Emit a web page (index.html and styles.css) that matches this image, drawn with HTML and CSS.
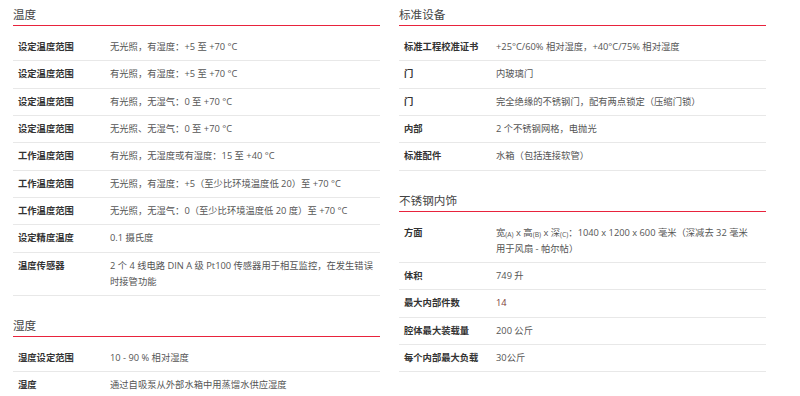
FILE: index.html
```html
<!DOCTYPE html>
<html lang="zh">
<head>
<meta charset="utf-8">
<link rel="stylesheet" href="styles.css">
</head>
<body>
<div class="page">
  <div class="col">
    <section class="sec">
      <h2 class="title">温度</h2>
      <div class="rows">
        <div class="row"><div class="k">设定温度范围</div><div class="v">无光照，有湿度：+5 至 +70 °C</div></div>
        <div class="row"><div class="k">设定温度范围</div><div class="v">有光照，有湿度：+5 至 +70 °C</div></div>
        <div class="row"><div class="k">设定温度范围</div><div class="v">有光照，无湿气：0 至 +70 °C</div></div>
        <div class="row"><div class="k">设定温度范围</div><div class="v">无光照、无湿气：0 至 +70 °C</div></div>
        <div class="row"><div class="k">工作温度范围</div><div class="v">有光照，无湿度或有湿度：15 至 +40 °C</div></div>
        <div class="row"><div class="k">工作温度范围</div><div class="v">无光照，有湿度：+5（至少比环境温度低 20）至 +70 °C</div></div>
        <div class="row"><div class="k">工作温度范围</div><div class="v">无光照，无湿气：0（至少比环境温度低 20 度）至 +70 °C</div></div>
        <div class="row"><div class="k">设定精度温度</div><div class="v">0.1 摄氏度</div></div>
        <div class="row"><div class="k">温度传感器</div><div class="v">2 个 4 线电路 DIN A 级 Pt100 传感器用于相互监控，在发生错误时接管功能</div></div>
      </div>
    </section>
    <section class="sec">
      <h2 class="title">湿度</h2>
      <div class="rows">
        <div class="row"><div class="k">湿度设定范围</div><div class="v">10 - 90 % 相对湿度</div></div>
        <div class="row"><div class="k">湿度</div><div class="v">通过自吸泵从外部水箱中用蒸馏水供应湿度</div></div>
      </div>
    </section>
  </div>
  <div class="col">
    <section class="sec">
      <h2 class="title">标准设备</h2>
      <div class="rows">
        <div class="row"><div class="k">标准工程校准证书</div><div class="v">+25°C/60% 相对湿度，+40°C/75% 相对湿度</div></div>
        <div class="row"><div class="k">门</div><div class="v">内玻璃门</div></div>
        <div class="row"><div class="k">门</div><div class="v">完全绝缘的不锈钢门，配有两点锁定（压缩门锁）</div></div>
        <div class="row"><div class="k">内部</div><div class="v">2 个不锈钢网格，电抛光</div></div>
        <div class="row"><div class="k">标准配件</div><div class="v">水箱（包括连接软管）</div></div>
      </div>
    </section>
    <section class="sec">
      <h2 class="title">不锈钢内饰</h2>
      <div class="rows">
        <div class="row"><div class="k">方面</div><div class="v">宽<sub>(A)</sub> x 高<sub>(B)</sub> x 深<sub>(C)</sub>：1040 x 1200 x 600 毫米（深减去 32 毫米用于风扇 - 帕尔帖）</div></div>
        <div class="row"><div class="k">体积</div><div class="v">749 升</div></div>
        <div class="row"><div class="k">最大内部件数</div><div class="v accent">14</div></div>
        <div class="row"><div class="k">腔体最大装载量</div><div class="v">200 公斤</div></div>
        <div class="row"><div class="k">每个内部最大负载</div><div class="v">30公斤</div></div>
      </div>
    </section>
    <section class="sec">
      <h2 class="title">体积与重量</h2>
    </section>
  </div>
</div>
</body>
</html>
```

FILE: styles.css
```css
html, body {
  margin: 0;
  padding: 0;
  background: #ffffff;
}
body {
  font-family: "Open Sans", "Noto Sans CJK SC", sans-serif;
  font-size: 9.3px;
  color: #555555;
  overflow: hidden;
  height: 396px;
}
.page {
  display: grid;
  grid-template-columns: 367px 367px;
  column-gap: 19px;
  padding-left: 13px;
}
.sec {
  margin-top: 22px;
}
.sec:first-child {
  margin-top: 7px;
}
.title {
  margin: 0;
  font-size: 11.6px;
  font-weight: normal;
  color: #444444;
  line-height: 16px;
  padding-bottom: 2px;
  border-bottom: 1.5px solid #e8233d;
}
.rows {
  margin-top: 8px;
}
.row {
  display: grid;
  grid-template-columns: 92px 1fr;
  padding: 5.17px 6px 5.17px 5px;
  line-height: 16px;
  border-bottom: 1px solid #e8e8e8;
}
.col + .col .row {
  padding-right: 12px;
}
.k {
  font-weight: bold;
  color: #333333;
}
.v {
  color: #555555;
}
.accent {
  color: #7d3b3b;
}
sub {
  font-size: 6.8px;
  line-height: 1;
  vertical-align: -1px;
}
```
